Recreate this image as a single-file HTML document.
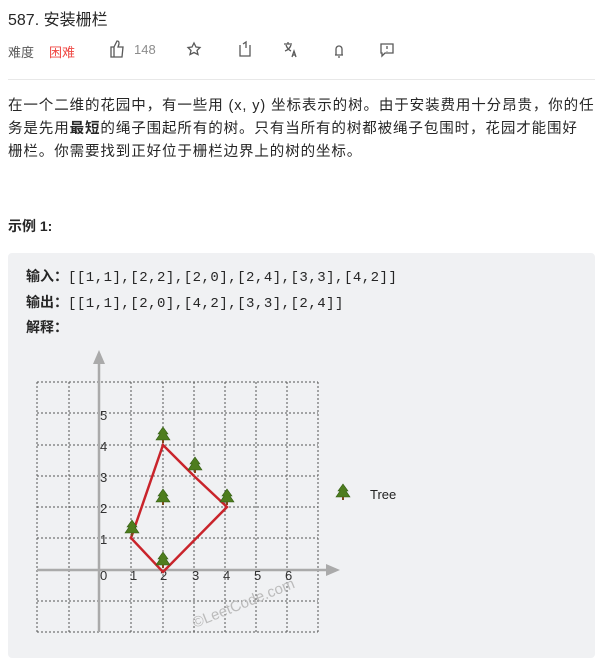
<!DOCTYPE html>
<html><head><meta charset="utf-8"><style>
body{margin:0;background:#fff;width:611px;height:666px;overflow:hidden;font-family:"Liberation Sans","Noto Sans CJK SC",sans-serif;color:#262626}
.t{position:absolute;left:8px;top:6px;font-size:16px}
.m{position:absolute;top:42px;font-size:13px;color:#595959}
.hr{position:absolute;left:8px;right:16px;top:79px;height:1px;background:#e8e8e8}
.d{position:absolute;left:8px;top:95px;font-size:14.5px;line-height:23px;width:600px;color:#262626;letter-spacing:0.9px;white-space:nowrap}
.ex{position:absolute;left:8px;top:216px;font-size:14px;font-weight:bold}
.p{position:absolute;left:8px;top:253px;width:587px;height:405px;background:#f0f1f3;border-radius:4px}
.c{position:absolute;left:26px;top:265px;font-size:14px;line-height:23.5px;font-family:"Liberation Mono","Noto Sans CJK SC",monospace;letter-spacing:0.5px}
.c b{font-family:"Liberation Sans","Noto Sans CJK SC",sans-serif;letter-spacing:0}
svg{position:absolute;left:0;top:0}
</style></head><body>
<div class="t">587. 安装栅栏</div>
<div class="m" style="left:8px">难度</div>
<div class="m" style="left:49px;color:#ef4743">困难</div>
<svg width="611" height="80" style="position:absolute" fill="none" stroke="#595959" stroke-width="1.3">
<path d="M111 57V47h3l3-6c2 0 2 1 2 3l-1 3h5l-1 10z M111 47h3v10"/>
<path d="M194 43l2 4 4 .5-3 3 1 4-4-2-4 2 1-4-3-3 4-.5z"/>
<path d="M240 45v11h10V45 M243 44l3-2v6"/>
<path d="M284 44h8M288 42v2M286 45c1 3 3 5 5 6M291 45c-1 3-3 5-6 6M292 57l2-6 2 6M293 55h2"/>
<path d="M335 55h8M336 55v-6a3 3 0 0 1 6 0v6M338 57h2"/>
<path d="M381 44h12v9h-8l-3 3v-3h-1z M387 46v3M387 51v.5"/>
</svg>
<div class="m" style="left:134px;color:#8c8c8c">148</div>
<div class="hr"></div>
<div class="d">在一个二维的花园中，有一些用 (x, y) 坐标表示的树。由于安装费用十分昂贵，你的任<br>务是先用<b>最短</b>的绳子围起所有的树。只有当所有的树都被绳子包围时，花园才能围好<br>栅栏。你需要找到正好位于栅栏边界上的树的坐标。</div>
<div class="ex">示例 1:</div>
<div class="p"></div>
<div class="c"><b>输入：</b>[[1,1],[2,2],[2,0],[2,4],[3,3],[4,2]]<br><b>输出：</b>[[1,1],[2,0],[4,2],[3,3],[2,4]]<br><b>解释：</b></div>
<svg width="611" height="666">
<defs><g id="tr"><path d="M0-10L5-3H3L7 3H-7L-3-3H-5z" fill="#4e7d1e" stroke="#2f5a10" stroke-width=".6"/><rect x="-1" y="3" width="2" height="3" fill="#7a4a1c"/></g></defs>
<g stroke="#555" stroke-width="1" stroke-dasharray="2,2" fill="none">
<path d="M37 382V632M69 382V632M131 382V632M163 382V632M194 382V632M225 382V632M256 382V632M287 382V632M318 382V632"/>
<path d="M37 382H318M37 413H318M37 445H318M37 476H318M37 507H318M37 538H318M37 601H318M37 632H318"/>
</g>
<g stroke="#aaa" stroke-width="2.5"><path d="M99 362V632M37 570H328"/></g>
<path d="M99 350l-6 14h12z" fill="#aaa"/><path d="M340 570l-14-6v12z" fill="#aaa"/>
<g font-family="Liberation Sans,sans-serif" font-size="13" fill="#333">
<text x="100" y="420">5</text><text x="100" y="451">4</text><text x="100" y="482">3</text><text x="100" y="513">2</text><text x="100" y="544">1</text>
<text x="100" y="580">0</text><text x="130" y="580">1</text><text x="160" y="580">2</text><text x="192" y="580">3</text><text x="223" y="580">4</text><text x="254" y="580">5</text><text x="285" y="580">6</text>
</g>
<text x="195" y="628" font-family="Liberation Sans,sans-serif" font-size="15" fill="#bbb" transform="rotate(-22 195 628)">©LeetCode.com</text>
<path d="M131 538L163 445L194 476L227 507L163 572Z" fill="none" stroke="#c9242b" stroke-width="2.5"/>
<use href="#tr" x="163" y="437"/><use href="#tr" x="195" y="467"/><use href="#tr" x="163" y="499"/><use href="#tr" x="227" y="499"/><use href="#tr" x="132" y="530"/><use href="#tr" x="163" y="562"/><use href="#tr" x="343" y="494"/>
<text x="370" y="499" font-family="Liberation Sans,sans-serif" font-size="13" fill="#222">Tree</text>
</svg>
</body></html>
